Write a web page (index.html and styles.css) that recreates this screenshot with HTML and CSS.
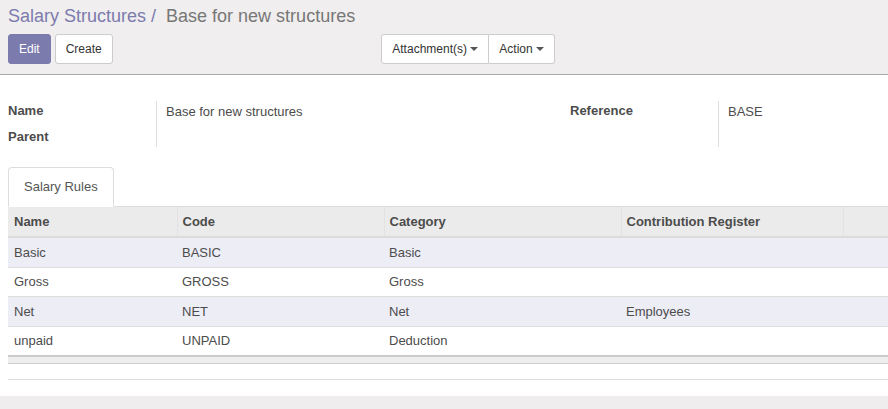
FILE: index.html
```html
<!DOCTYPE html>
<html>
<head>
<meta charset="utf-8">
<link rel="stylesheet" href="styles.css">
</head>
<body>
<div class="cp">
  <div class="breadcrumb">
    <span class="bc-link">Salary Structures /</span><span class="bc-active">Base for new structures</span>
  </div>
  <div class="cp-buttons">
    <button class="btn btn-primary">Edit</button>
    <button class="btn btn-default">Create</button>
    <div class="btn-group">
      <button class="btn btn-default">Attachment(s) <span class="caret"></span></button><button class="btn btn-default">Action <span class="caret"></span></button>
    </div>
  </div>
</div>
<div class="sheet">
  <div class="groups">
    <div class="group">
      <div class="labels">
        <div class="lbl">Name</div>
        <div class="lbl">Parent</div>
      </div>
      <div class="values">
        <div class="val">Base for new structures</div>
      </div>
    </div>
    <div class="group">
      <div class="labels">
        <div class="lbl">Reference</div>
        <div class="lbl"></div>
      </div>
      <div class="values">
        <div class="val">BASE</div>
      </div>
    </div>
  </div>
  <div class="notebook">
    <div class="tabs"><div class="tab">Salary Rules</div></div>
    <div class="pane">
      <table class="list">
        <colgroup>
          <col class="c1"><col class="c2"><col class="c3"><col class="c4"><col class="c5">
        </colgroup>
        <thead>
          <tr><th>Name</th><th>Code</th><th>Category</th><th>Contribution Register</th><th></th></tr>
        </thead>
        <tbody>
          <tr class="odd"><td>Basic</td><td>BASIC</td><td>Basic</td><td></td><td></td></tr>
          <tr><td>Gross</td><td>GROSS</td><td>Gross</td><td></td><td></td></tr>
          <tr class="odd"><td>Net</td><td>NET</td><td>Net</td><td>Employees</td><td></td></tr>
          <tr><td>unpaid</td><td>UNPAID</td><td>Deduction</td><td></td><td></td></tr>
        </tbody>
        <tfoot>
          <tr><td></td><td></td><td></td><td></td><td></td></tr>
        </tfoot>
      </table>
      <div class="list-bottom"></div>
    </div>
  </div>
</div>
</body>
</html>
```
FILE: styles.css
```css
html, body {
  margin: 0;
  padding: 0;
}
body {
  background: #efeded;
  font-family: "Liberation Sans", Arial, sans-serif;
  font-size: 13px;
  color: #4c4c4c;
  overflow: hidden;
  height: 409px;
}
.cp {
  background: #f0eeee;
  padding: 0 8px 10px 8px;
  border-bottom: 1px solid #a9a9a9;
}
.breadcrumb {
  height: 34px;
  line-height: 32px;
  font-size: 18px;
  white-space: nowrap;
}
.bc-link {
  color: #7c7bad;
}
.bc-active {
  color: #777777;
  margin-left: 10px;
}
.cp-buttons {
  display: flex;
  align-items: center;
  width: 547px;
  height: 30px;
}
.btn {
  font-family: inherit;
  font-size: 12px;
  line-height: 18px;
  padding: 5px 10px;
  height: 30px;
  border: 1px solid #cccccc;
  border-radius: 3px;
  background: #ffffff;
  color: #333333;
  margin: 0 4px 0 0;
  cursor: pointer;
  white-space: nowrap;
}
.btn-primary {
  background: #7c7bad;
  border-color: #7c7bad;
  color: #ffffff;
}
.btn-group {
  margin-left: auto;
  display: flex;
}
.btn-group .btn {
  margin: 0;
  border-radius: 0;
}
.btn-group .btn:first-child {
  border-radius: 3px 0 0 3px;
}
.btn-group .btn:last-child {
  border-radius: 0 3px 3px 0;
  border-left: none;
}
.caret {
  display: inline-block;
  width: 0;
  height: 0;
  margin-left: 0;
  vertical-align: middle;
  border-top: 4px solid #555555;
  border-left: 4px solid transparent;
  border-right: 4px solid transparent;
  position: relative;
  top: -1px;
}
.sheet {
  background: #ffffff;
  padding: 26px 0 16px 8px;
  height: 279px;
  overflow: hidden;
}
.groups {
  display: grid;
  grid-template-columns: 562px 562px;
  width: 1124px;
}
.group {
  display: grid;
  grid-template-columns: 149px 1fr;
}
.labels {
  border-right: 1px solid #dddddd;
}
.lbl {
  font-weight: bold;
  line-height: 20px;
  height: 20px;
}
.lbl:first-child {
  margin-bottom: 6px;
}
.val {
  padding: 1px 0 0 9px;
  line-height: 20px;
}
.notebook {
  margin-top: 20px;
}
.tabs {
  display: flex;
  border-bottom: 1px solid #dddddd;
  width: 1124px;
}
.tab {
  height: 38px;
  line-height: 38px;
  padding: 0 15px;
  border: 1px solid #dddddd;
  border-bottom-color: #ffffff;
  border-radius: 4px 4px 0 0;
  margin-bottom: -1px;
  background: #ffffff;
  color: #555555;
}
.list {
  border-collapse: collapse;
  table-layout: fixed;
  width: 1124px;
}
.c1 { width: 169px; }
.c2 { width: 207px; }
.c3 { width: 237px; }
.c4 { width: 222px; }
.list th {
  background: #ebebeb;
  text-align: left;
  font-weight: bold;
  padding: 6px 5px 5px 5px;
  line-height: 18px;
  border-bottom: 2px solid #dcdcdc;
  border-left: 1px solid #e2e2e2;
}
.list th:first-child {
  border-left: none;
  padding-left: 6px;
}
.list td {
  padding: 5.5px 5px 4.5px 5px;
  line-height: 18.6px;
  border-top: 1px solid #dddddd;
}
.list td:first-child {
  padding-left: 6px;
}
.list tbody tr.odd {
  background: #ededf6;
}
.list tfoot td {
  background: #eeeeee;
  border-top: 2px solid #cccccc;
  border-bottom: 1px solid #cccccc;
  height: 6px;
  padding: 0;
  line-height: 6px;
}
.list-bottom {
  height: 15px;
  border-bottom: 1px solid #dddddd;
  width: 1124px;
}
```
